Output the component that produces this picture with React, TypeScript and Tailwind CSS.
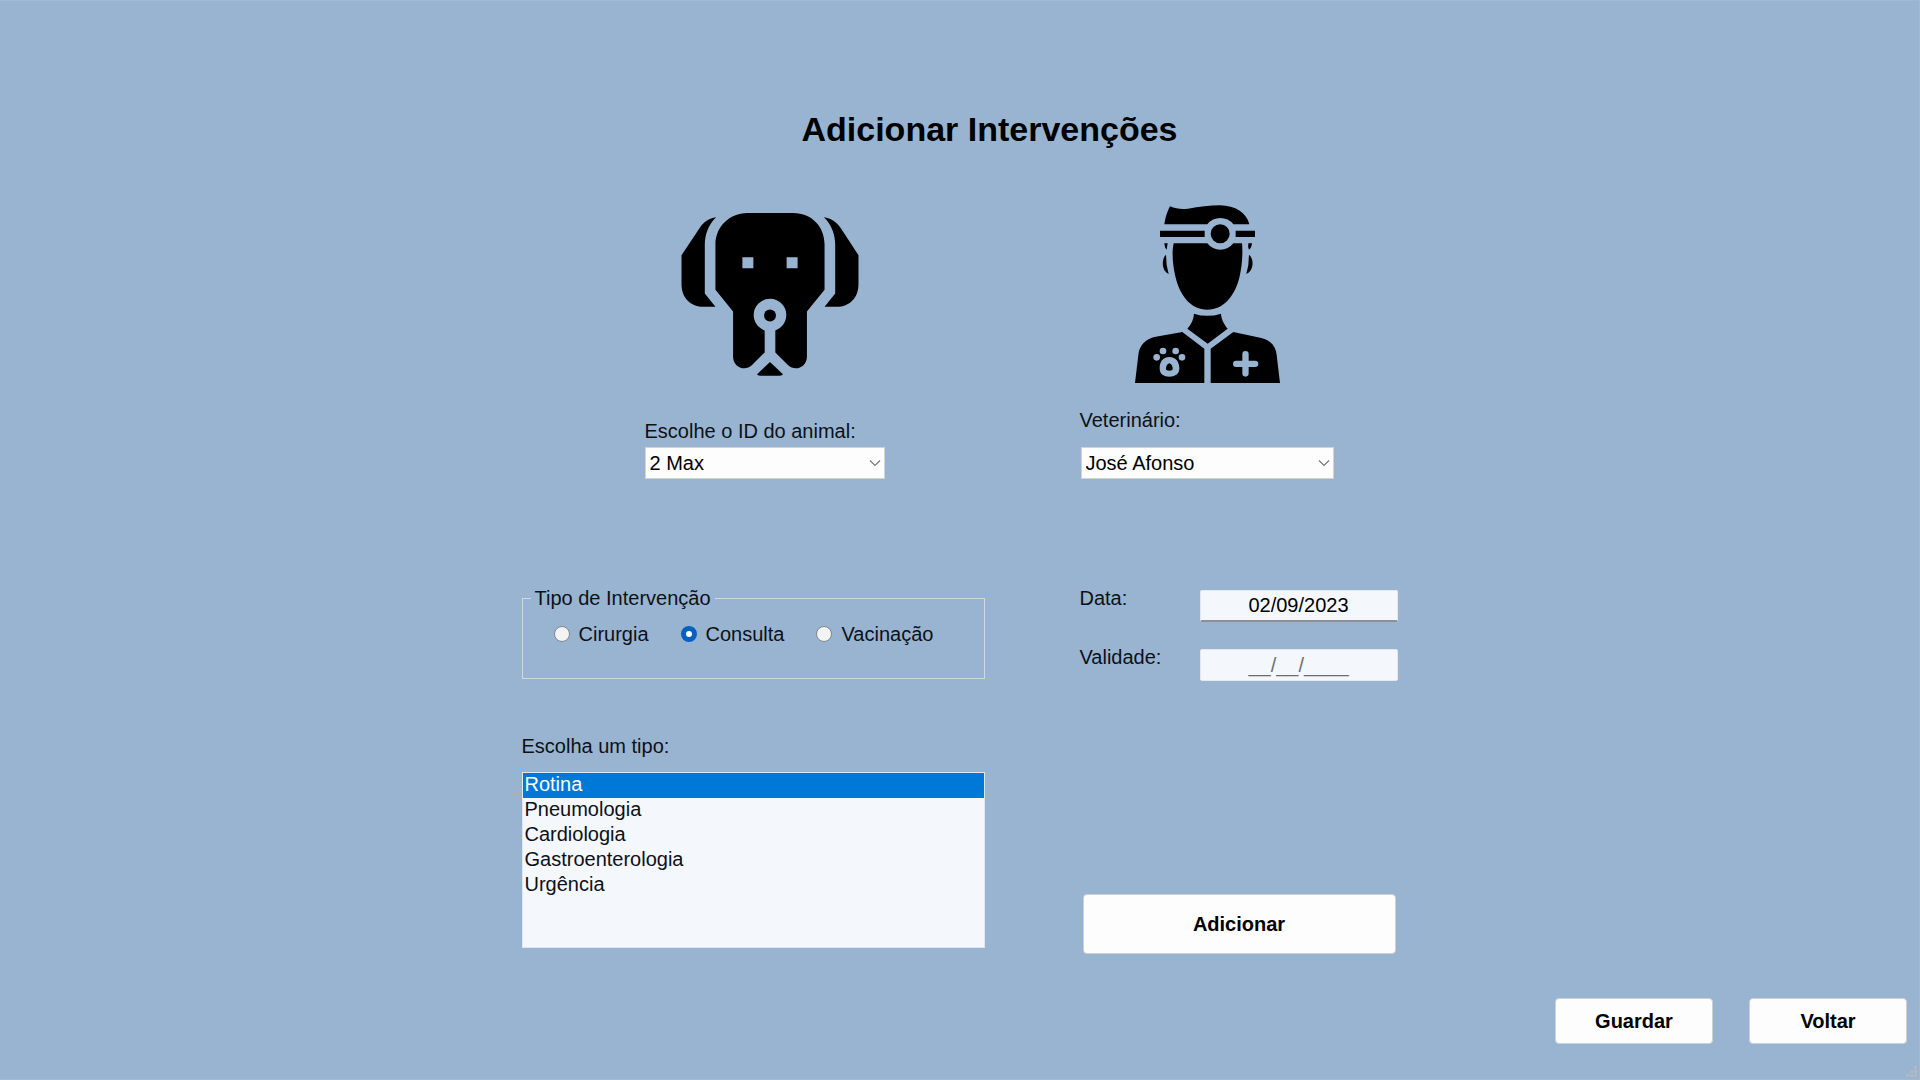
import { useState } from "react";
import type { ReactNode } from "react";

const animals = ["2 Max"];
const vets = ["José Afonso"];
const interventions = ["Cirurgia", "Consulta", "Vacinação"];
const kinds = ["Rotina", "Pneumologia", "Cardiologia", "Gastroenterologia", "Urgência"];

function DogIcon() {
  return (
    <svg viewBox="63 66 534 490" className="h-[163px] w-[178px]" aria-hidden="true">
      <path d="M168 79C145 101 134 130 134 164V308L166 348H132C90 348 64 320 64 280V193L118 112C130 94 147 81 168 79Z" />
      <path d="M492 79C515 101 526 130 526 164V308L494 348H530C570 348 596 320 596 280V193L543 112C530 94 514 81 492 79Z" />
      <path
        fillRule="evenodd"
        d="M262 66H400C456 66 494 108 494 160V297L441 362V498C441 530 405 544 384 523L346 485V419C366 412 379 394 379 373A49 49 0 1 0 281 373C281 394 294 412 314 419V485L276 523C255 544 219 530 219 498V362L166 297V160C166 108 208 66 262 66ZM247 199V232H280V199ZM380 199V232H413V199Z"
      />
      <circle cx="330" cy="374" r="18" />
      <path d="M330 514L369 551Q367 555 360 555H300Q293 555 291 551Z" />
    </svg>
  );
}

function VetIcon() {
  return (
    <svg viewBox="75 44 435 534" className="h-[178px] w-[145px]" aria-hidden="true">
      <path d="M180 48C197 55 215 58 234 55C268 49 300 45 330 45C376 46 410 67 418 102H370A49 49 0 0 0 292 102H163Q167 72 180 48Z" />
      <path d="M150 121H284V140H150ZM377 121H435V140H377Z" />
      <circle cx="330.500" cy="130" r="28.500" />
      <path d="M191 159H292A49 49 0 0 0 370 159H396C399 188 396 227 389 258C375 318 341 358 292 358C243 358 210 318 196 258C188 224 185 184 191 159Z" />
      <path d="M163 159H173L170 178Q164 173 163 159ZM415 159H426Q425 173 417 178Q413 171 415 159Z" />
      <path d="M168 193Q168 224 176 251C154 242 154 204 168 193ZM417 193Q417 224 409 251C432 242 433 204 417 193Z" />
      <path d="M252 370Q292 383 333 370C334 388 343 403 353 415L293 460L232 415C243 403 251 388 252 370Z" />
      <path
        fillRule="evenodd"
        d="M217 425L283 475V578H75L85 494C88 463 108 447 133 440ZM178 500C158 500 149 515 149 534C149 553 162 559 178 559C194 559 208 553 208 534C208 515 198 500 178 500ZM140 491A10 10 0 1 0 140 511A10 10 0 1 0 140 491ZM159 472A10 10 0 1 0 159 492A10 10 0 1 0 159 472ZM197 472A10 10 0 1 0 197 492A10 10 0 1 0 197 472ZM216 491A10 10 0 1 0 216 511A10 10 0 1 0 216 491Z"
      />
      <path d="M178 519Q188 522 188 536Q188 541 178 541Q168 541 168 536Q168 522 178 519Z" />
      <path
        fillRule="evenodd"
        d="M370 425L454 443C483 450 498 469 500 494L510 578H302V475ZM397 492V511H378Q369 511 369 520.500Q369 530 378 530H397V549Q397 559 406.500 559Q416 559 416 549V530H435Q445 530 445 520.500Q445 511 435 511H416V492Q416 482 406.500 482Q397 482 397 492Z"
      />
    </svg>
  );
}

function Combo({ id, options, width }: { id: string; options: string[]; width: string }) {
  return (
    <div className={`relative ${width}`}>
      <select
        id={id}
        className="block h-8 w-full appearance-none border border-[#d3d3d3] bg-[#fdfdfd] pr-8 pl-1 text-xl leading-7 text-black"
      >
        {options.map((o) => (
          <option key={o}>{o}</option>
        ))}
      </select>
      <svg
        viewBox="0 0 12 8"
        className="pointer-events-none absolute top-3 right-1 h-2 w-3"
        fill="none"
        stroke="#777"
        strokeWidth="1.2"
        aria-hidden="true"
      >
        <path d="M1 1.500L6 6.500L11 1.500" />
      </svg>
    </div>
  );
}

function PushButton({ children, className }: { children: ReactNode; className: string }) {
  return (
    <button
      type="button"
      className={`rounded border border-[#d0d0d0] bg-[#fdfdfd] text-xl font-bold text-black ${className}`}
    >
      {children}
    </button>
  );
}

export default function App() {
  const [type, setType] = useState("Consulta");
  const [kind, setKind] = useState("Rotina");

  return (
    <div className="relative flex min-h-screen flex-col border-y border-r border-[#9dbbd3] bg-[#99b4d1] font-['Liberation_Sans',Arial,sans-serif] text-xl leading-6 text-[#0d1117]">
      <div className="absolute inset-x-0 -top-px mx-auto h-2 w-[280px] bg-radial-[closest-side_at_50%_0%] from-[#8fa6c3] to-transparent" />
      <main className="mx-auto w-full max-w-[876px] flex-1">
        <h1 className="mt-[108px] pl-[60px] text-center text-[34px] leading-10 font-bold text-black">
          Adicionar Intervenções
        </h1>

        <div className="mt-14 grid grid-cols-[463fr_318fr] gap-x-[95px]">
          <section className="ml-[123px] flex w-60 flex-col">
            <div className="flex h-[210px] justify-center pt-2 pl-2.5">
              <DogIcon />
            </div>
            <label htmlFor="animal" className="my-1 whitespace-nowrap">
              Escolhe o ID do animal:
            </label>
            <Combo id="animal" options={animals} width="w-60" />
          </section>

          <section className="flex flex-col">
            <div className="flex h-[203px] w-[255px] justify-center">
              <VetIcon />
            </div>
            <label htmlFor="vet" className="mb-[15px]">
              Veterinário:
            </label>
            <Combo id="vet" options={vets} width="ml-px w-[253px]" />
          </section>
        </div>

        <div className="mt-[107px] grid grid-cols-[463fr_318fr] gap-x-[95px]">
          <fieldset className="h-[93px] border border-[#d3d8dc] pl-2">
            <legend className="px-1">Tipo de Intervenção</legend>
            <div className="mt-3 flex gap-8 pl-[23px]">
              {interventions.map((t) => (
                <label key={t} className="flex items-center gap-[9px]">
                  <input
                    type="radio"
                    name="type"
                    checked={type === t}
                    onChange={() => setType(t)}
                    className="size-4 appearance-none rounded-full border border-[#808890] bg-[#f3f3f3] checked:border-5 checked:border-[#0560c0] checked:bg-white"
                  />
                  {t}
                </label>
              ))}
            </div>
          </fieldset>

          <div className="flex flex-col gap-[23px]">
            <div className="flex justify-between">
              <label htmlFor="date">Data:</label>
              <input
                id="date"
                defaultValue="02/09/2023"
                className="mt-1 h-8 w-[198px] rounded-xs border border-b-2 border-[#e4e8ec] border-b-[#8c9096] bg-[#f4f7fc] text-center text-black"
              />
            </div>
            <div className="flex justify-between">
              <label htmlFor="expiry">Validade:</label>
              <input
                id="expiry"
                defaultValue="__/__/____"
                className="mt-1 h-8 w-[198px] rounded-xs border border-[#e4e8ec] bg-[#f4f7fc] text-center text-[#6d6d6d]"
              />
            </div>
          </div>
        </div>

        <div className="mt-[53px] grid grid-cols-[463fr_318fr] gap-x-[95px]">
          <div className="flex flex-col">
            <label htmlFor="kind">Escolha um tipo:</label>
            <select
              id="kind"
              size={7}
              value={kind}
              onChange={(e) => setKind(e.target.value)}
              className="mt-[14px] h-44 overflow-hidden border border-[#dfe6ee] bg-[#f4f7fc]"
            >
              {kinds.map((k) => (
                <option
                  key={k}
                  className="h-[25px] px-0.5 py-0 leading-[25px] text-[#0d1117] checked:bg-[#0078d7] checked:bg-[linear-gradient(#0078d7,#0078d7)] checked:text-white"
                >
                  {k}
                </option>
              ))}
            </select>
          </div>
          <div className="flex flex-col justify-end pr-0.5 pl-[3px]">
            <PushButton className="-mb-1.5 h-[60px]">Adicionar</PushButton>
          </div>
        </div>
      </main>

      <footer className="flex justify-end gap-9 pr-3 pb-[35px]">
        <PushButton className="h-[46px] w-[158px]">Guardar</PushButton>
        <PushButton className="h-[46px] w-[158px]">Voltar</PushButton>
      </footer>

      <svg viewBox="0 0 11 11" className="absolute right-0.5 bottom-0.5 size-[11px]" fill="#b5b9bd" aria-hidden="true">
        <path d="M8 0h3v3h-3zM4 4h3v3h-3zM8 4h3v3h-3zM0 8h3v3h-3zM4 8h3v3h-3zM8 8h3v3h-3z" />
      </svg>
    </div>
  );
}
